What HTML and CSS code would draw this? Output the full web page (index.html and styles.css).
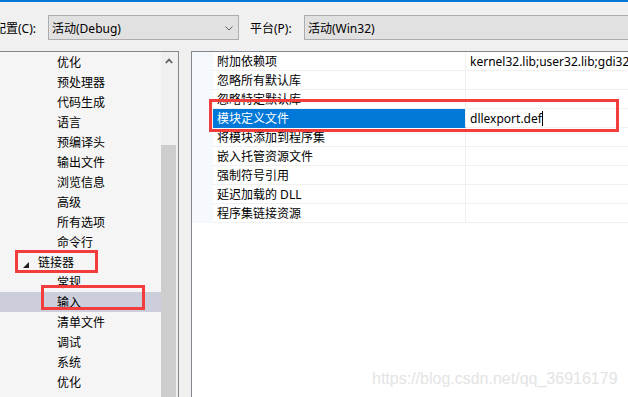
FILE: index.html
```html
<!DOCTYPE html>
<html lang="zh-CN">
<head>
    <meta charset="UTF-8">
    <meta name="viewport" content="width=device-width, initial-scale=1.0">
    <title>属性页</title>
    <link rel="stylesheet" href="styles.css">
</head>
<body>
    <div class="titlebar"></div>

    <div class="toolbar">
        <span class="label config-label">配置(C):</span>
        <div class="combo config-combo">
            <span>活动(Debug)</span>
            <svg class="chevron" width="8" height="5" viewBox="0 0 8 5">
                <polyline points="0.5,0.5 4,4 7.5,0.5" fill="none" stroke="#606060" stroke-width="1"/>
            </svg>
        </div>
        <span class="label platform-label">平台(P):</span>
        <div class="combo platform-combo">
            <span>活动(Win32)</span>
        </div>
    </div>

    <div class="main">
        <div class="tree-panel">
            <ul class="tree">
                <li>优化</li>
                <li>预处理器</li>
                <li>代码生成</li>
                <li>语言</li>
                <li>预编译头</li>
                <li>输出文件</li>
                <li>浏览信息</li>
                <li>高级</li>
                <li>所有选项</li>
                <li>命令行</li>
                <li class="group">
                    <svg class="expander" width="6" height="6" viewBox="0 0 6 6">
                        <polygon points="6,0 6,6 0,6" fill="#1e1e1e"/>
                    </svg>
                    链接器
                </li>
                <li>常规</li>
                <li class="selected">输入</li>
                <li>清单文件</li>
                <li>调试</li>
                <li>系统</li>
                <li>优化</li>
            </ul>
            <div class="scrollbar">
                <div class="scroll-up">
                    <svg width="8" height="6" viewBox="0 0 8 6">
                        <polyline points="0.8,5 4,1.6 7.2,5" fill="none" stroke="#606060" stroke-width="1.8"/>
                    </svg>
                </div>
                <div class="thumb"></div>
            </div>
        </div>

        <div class="grid-panel">
            <div class="grid">
                <div class="row">
                    <div class="strip"></div>
                    <div class="name">附加依赖项</div>
                    <div class="value">kernel32.lib;user32.lib;gdi32.lib;winspool.lib;comdlg32.lib;advapi32.lib</div>
                </div>
                <div class="row">
                    <div class="strip"></div>
                    <div class="name">忽略所有默认库</div>
                    <div class="value"></div>
                </div>
                <div class="row">
                    <div class="strip"></div>
                    <div class="name">忽略特定默认库</div>
                    <div class="value"></div>
                </div>
                <div class="row active">
                    <div class="strip"></div>
                    <div class="name">模块定义文件</div>
                    <div class="value">dllexport.def<span class="caret"></span></div>
                </div>
                <div class="row">
                    <div class="strip"></div>
                    <div class="name">将模块添加到程序集</div>
                    <div class="value"></div>
                </div>
                <div class="row">
                    <div class="strip"></div>
                    <div class="name">嵌入托管资源文件</div>
                    <div class="value"></div>
                </div>
                <div class="row">
                    <div class="strip"></div>
                    <div class="name">强制符号引用</div>
                    <div class="value"></div>
                </div>
                <div class="row">
                    <div class="strip"></div>
                    <div class="name">延迟加载的 DLL</div>
                    <div class="value"></div>
                </div>
                <div class="row">
                    <div class="strip"></div>
                    <div class="name">程序集链接资源</div>
                    <div class="value"></div>
                </div>
            </div>
        </div>
    </div>

    <!-- red annotation boxes -->
    <div class="mark mark-linker"></div>
    <div class="mark mark-input"></div>
    <div class="mark mark-def"></div>

    <div class="watermark">https://blog.csdn.net/qq_36916179</div>
</body>
</html>
```

FILE: styles.css
```css
* {
    margin: 0;
    padding: 0;
    box-sizing: border-box;
}

body {
    font-family: 'Noto Sans', 'Noto Sans CJK SC', sans-serif;
    font-size: 12px;
    color: #000;
    background-color: #f0f0f0;
    width: 628px;
    height: 397px;
    overflow: hidden;
    position: relative;
}

.titlebar {
    height: 2px;
    background-color: #0078d7;
}

.toolbar {
    display: flex;
    align-items: center;
    height: 25px;
    margin-top: 13px;
    margin-left: -6px;
    margin-right: -20px;
}

.label {
    white-space: nowrap;
    padding-top: 1px;
}

.config-label {
    width: 54px;
}

.platform-label {
    width: 54px;
    margin-left: 11px;
}

.combo {
    display: flex;
    align-items: center;
    height: 25px;
    padding-left: 3px;
    padding-top: 1px;
    background-color: #e1e1e1;
    border: 1px solid #adadad;
}

.config-combo {
    width: 191px;
    justify-content: space-between;
    padding-right: 5px;
}

.platform-combo {
    flex: 1;
}

.chevron {
    display: block;
}

.main {
    display: flex;
    margin-top: 11px;
    height: 346px;
}

.tree-panel {
    display: flex;
    width: 179px;
    border-top: 1px solid #828790;
    border-right: 1px solid #828790;
}

.tree {
    list-style: none;
    width: 161px;
    background-color: #f5f5f5;
}

.tree li {
    height: 20px;
    line-height: 20px;
    padding-top: 1px;
    padding-left: 57px;
    white-space: nowrap;
}

.tree li.group {
    display: flex;
    align-items: center;
    padding-left: 23px;
}

.expander {
    margin-right: 9px;
    margin-top: 5px;
}

.tree li.selected {
    background-color: #cccedb;
}

.scrollbar {
    width: 17px;
    background-color: #f0f0f0;
}

.scroll-up {
    display: flex;
    justify-content: center;
    align-items: center;
    height: 17px;
    padding-right: 2px;
}

.scroll-up svg {
    display: block;
}

.thumb {
    width: 15px;
    height: 300px;
    margin-top: 76px;
    background-color: #cdcdcd;
}

.grid-panel {
    flex: 1;
    margin-left: 12px;
    background-color: #fff;
    border-top: 1px solid #828790;
    border-left: 1px solid #828790;
}

.row {
    display: flex;
    height: 19px;
    line-height: 18px;
}

.strip {
    width: 21px;
    background-color: #f5f8fd;
}

.name {
    width: 253px;
    padding-left: 4px;
    padding-top: 1px;
    border-right: 1px solid #f0f0f0;
    border-bottom: 1px solid #f0f0f0;
    white-space: nowrap;
}

.value {
    flex: 1;
    padding-left: 4px;
    padding-top: 1px;
    border-bottom: 1px solid #f0f0f0;
    white-space: nowrap;
    overflow: hidden;
}

.row.active .name {
    background-color: #0078d7;
    color: #fff;
    border-bottom-color: #0078d7;
}

.caret {
    display: inline-block;
    width: 1px;
    height: 15px;
    background-color: #000;
    vertical-align: -3px;
}

.mark {
    position: absolute;
    border: 3px solid #f33d3d;
}

.mark-linker {
    left: 15px;
    top: 250px;
    width: 83px;
    height: 23px;
}

.mark-input {
    left: 41px;
    top: 285px;
    width: 104px;
    height: 25px;
}

.mark-def {
    left: 209px;
    top: 99px;
    width: 410px;
    height: 33px;
}

.watermark {
    position: absolute;
    left: 372px;
    top: 370px;
    font-family: 'Liberation Sans', Arial, sans-serif;
    font-size: 16px;
    line-height: 18px;
    color: #e4e4e4;
    white-space: nowrap;
}
```
